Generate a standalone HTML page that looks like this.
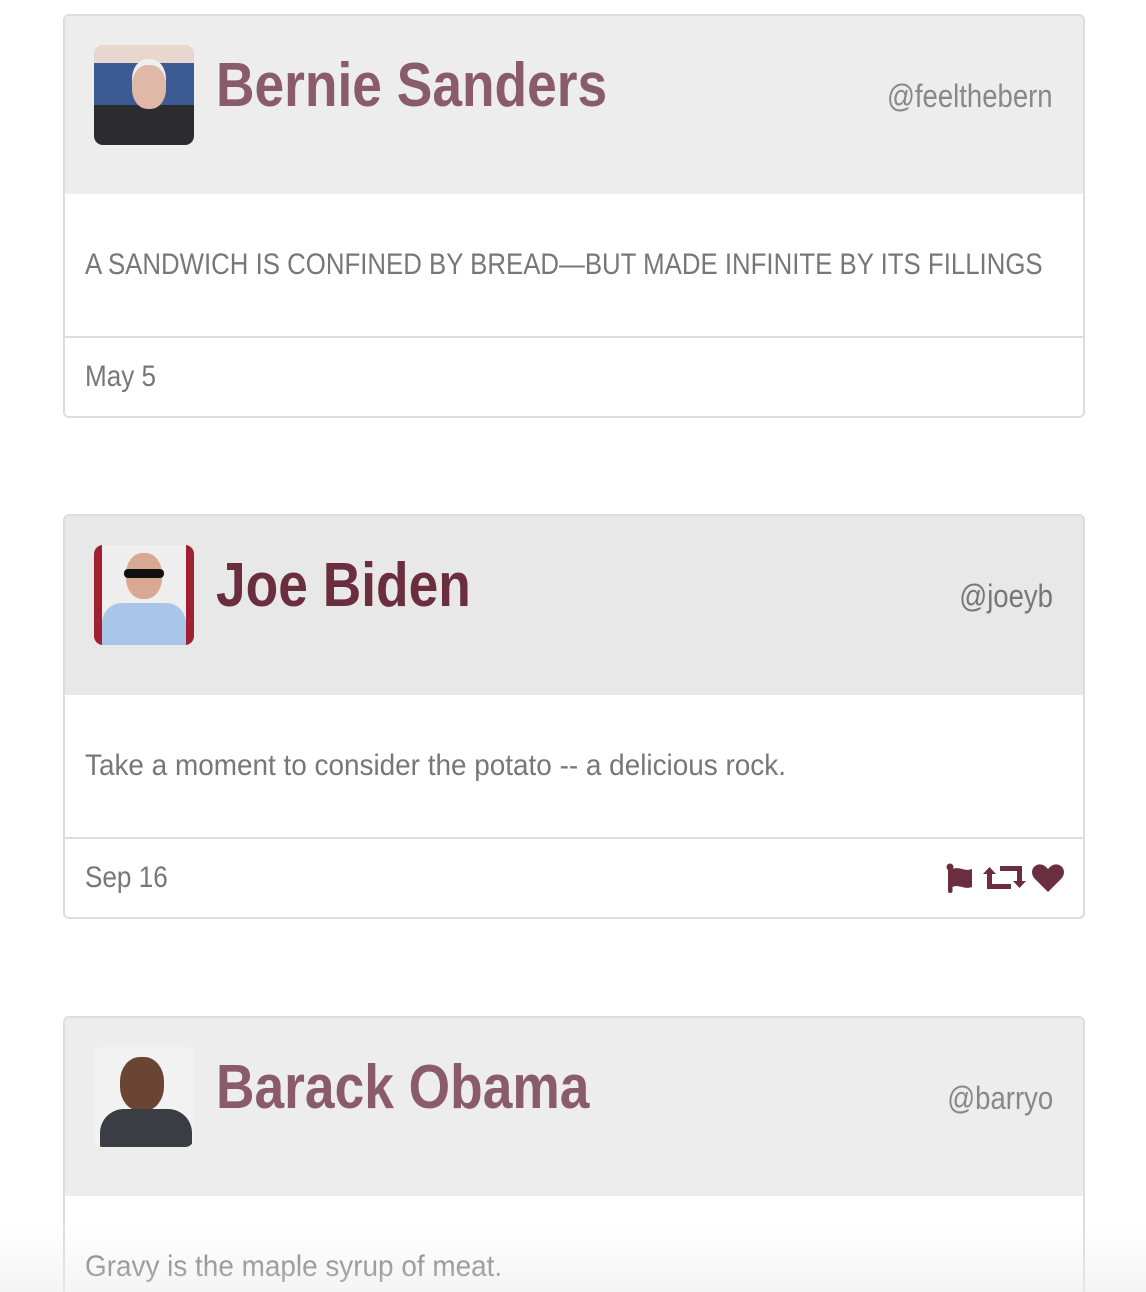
<!DOCTYPE html>
<html><head><style>
*{margin:0;padding:0;box-sizing:border-box}
html,body{width:1146px;height:1292px;overflow:hidden}
body{background:#fff;font-family:"Liberation Sans Narrow","Liberation Sans",sans-serif;position:relative}
.card{position:absolute;left:63px;width:1022px;border:2px solid #ddd;border-radius:6px;overflow:hidden;background:#fff}
.hd{height:178px;background:#ededed;position:relative}
.av{position:absolute;left:29px;top:29px;width:100px;height:100px;border-radius:9px;overflow:hidden}
.nm{position:absolute;left:151px;top:34px;font-size:62px;font-weight:bold;color:#8a5b6a;white-space:nowrap;transform:scaleX(.86);transform-origin:left}
.hn{position:absolute;right:30px;top:62px;font-size:32px;color:#888;white-space:nowrap;transform:scaleX(.86);transform-origin:right}
.bd{height:144px;border-bottom:2px solid #ddd;position:relative}
.tx{position:absolute;left:20px;top:54px;font-size:30px;color:#777;white-space:nowrap;transform:scaleX(.93);transform-origin:left}
.tx.c{transform:scaleX(.86)}
.ft{height:78px;position:relative}
.dt{position:absolute;left:20px;top:22px;font-size:30px;color:#777;transform:scaleX(.87);transform-origin:left}
.fade{position:absolute;left:0;top:1225px;width:1146px;height:67px;background:linear-gradient(rgba(255,255,255,0),rgba(235,235,235,.55))}
</style></head><body>
<div class="card" style="top:14px">
 <div class="hd">
  <div class="av" style="background:linear-gradient(#e8d6cf 0 18%,#3b5b92 18% 60%,#2b2b30 60%)"><div style="position:absolute;left:38px;top:20px;width:34px;height:44px;border-radius:45%;background:#e0b8a8;box-shadow:0 -6px 0 #eee"></div></div>
  <div class="nm">Bernie Sanders</div><div class="hn">@feelthebern</div>
 </div>
 <div class="bd"><div class="tx c">A SANDWICH IS CONFINED BY BREAD—BUT MADE INFINITE BY ITS FILLINGS</div></div>
 <div class="ft"><div class="dt">May 5</div></div>
</div>
<div class="card" style="top:514px">
 <div class="hd" style="background:#e8e8e8;height:179px">
  <div class="av" style="background:linear-gradient(90deg,#a02030 0 8%,#eee 8% 92%,#a02030 92%)"><div style="position:absolute;left:32px;top:8px;width:36px;height:46px;border-radius:45%;background:#d9a892"></div><div style="position:absolute;left:30px;top:24px;width:40px;height:9px;background:#111;border-radius:4px"></div><div style="position:absolute;left:8px;top:58px;width:84px;height:42px;border-radius:20px 20px 0 0;background:#a9c6e8"></div></div>
  <div class="nm" style="color:#6b2e3e">Joe Biden</div><div class="hn" style="color:#777">@joeyb</div>
 </div>
 <div class="bd"><div class="tx">Take a moment to consider the potato -- a delicious rock.</div></div>
 <div class="ft"><div class="dt">Sep 16</div>
  <svg style="position:absolute;left:880px;top:24px" width="120" height="32" viewBox="0 0 120 32">
   <g fill="#6b2e3e">
    <circle cx="5" cy="4" r="3.5"/><rect x="3" y="4" width="4.5" height="26" rx="2"/>
    <path d="M7 6c8-3 12 3 20 0v18c-8 3-12-3-20 0z"/>
    <path d="M38 11l6.5-7 6.5 7z"/><rect x="42" y="9" width="5" height="17"/><rect x="42" y="21" width="24" height="5"/>
    <rect x="55" y="3" width="22" height="5"/><rect x="72" y="3" width="5" height="17"/><path d="M68 18l6.5 7 6.5-7z"/>
   </g>
   <path fill="#6b2e3e" d="M103 29L90 16c-4-4-4-10 0-13 4-3 9-2 13 3 4-5 9-6 13-3 4 3 4 9 0 13z"/>
  </svg>
 </div>
</div>
<div class="card" style="top:1016px;height:290px">
 <div class="hd">
  <div class="av" style="background:#f2f2f2"><div style="position:absolute;left:26px;top:10px;width:44px;height:54px;border-radius:45%;background:#6b4534"></div><div style="position:absolute;left:6px;top:62px;width:92px;height:40px;border-radius:24px 24px 0 0;background:#3a3d44"></div></div>
  <div class="nm">Barack Obama</div><div class="hn">@barryo</div>
 </div>
 <div class="bd" style="border-bottom:none"><div class="tx">Gravy is the maple syrup of meat.</div></div>
</div>
<div class="fade"></div>
</body></html>
